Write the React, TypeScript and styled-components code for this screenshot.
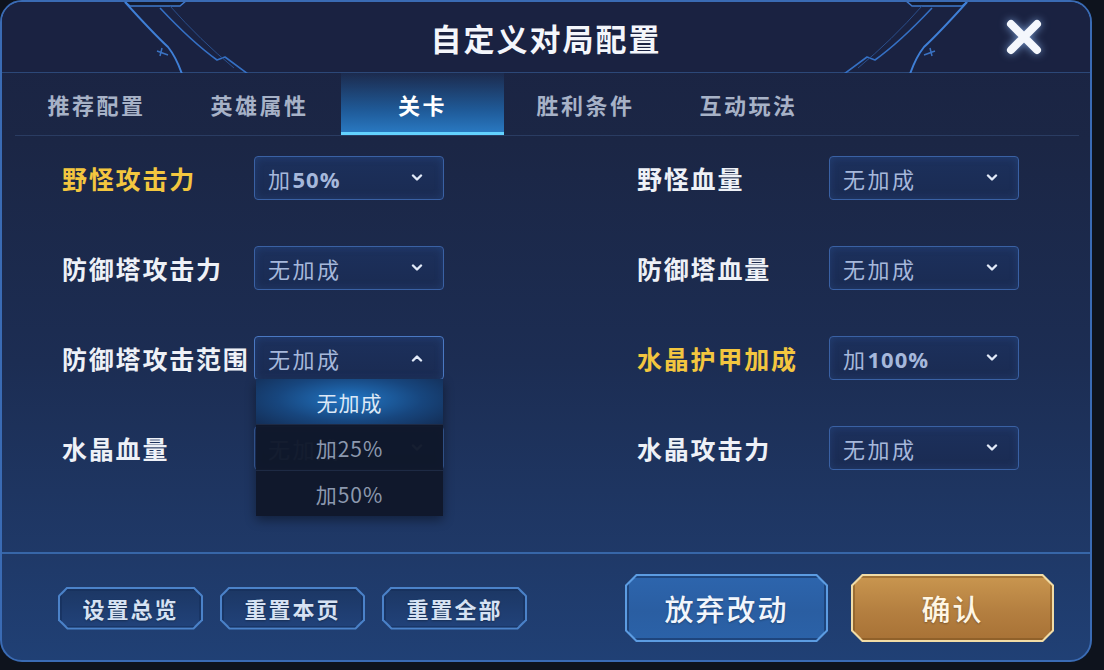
import React from 'react'
import styled, { createGlobalStyle, css } from 'styled-components'

const GlobalStyle = createGlobalStyle`
  html, body {
    margin: 0;
    padding: 0;
    background: #0e131d;
  }
  #root {
    width: 1104px;
    height: 670px;
    overflow: hidden;
  }
`

const CJK = `"Noto Sans CJK SC", "Noto Sans", sans-serif`

const Page = styled.div`
  width: 1104px;
  height: 670px;
  background: #0e131d;
  font-family: ${CJK};
`

const Panel = styled.div`
  position: relative;
  box-sizing: border-box;
  width: 1092px;
  height: 662px;
  border: 2px solid #3a6bb4;
  border-radius: 22px;
  overflow: hidden;
  display: flex;
  flex-direction: column;
  background: linear-gradient(
    180deg,
    #1a2342 0px,
    #1b2645 140px,
    #1c2d53 360px,
    #1f3968 553px,
    #204075 100%
  );
`

const Header = styled.div`
  position: relative;
  flex: 0 0 70px;
  display: flex;
  align-items: center;
  justify-content: center;
  background: #1a2241;
  border-bottom: 1px solid #2c4878;
`

const HeaderDeco = styled.svg`
  position: absolute;
  left: 0;
  top: 0;
  width: 1088px;
  height: 71px;
  pointer-events: none;
`

const Title = styled.h1`
  position: relative;
  margin: 0;
  font-size: 31px;
  font-weight: 700;
  letter-spacing: 2px;
  color: #f4f6fb;
`

const CloseButton = styled.button`
  position: absolute;
  right: 47px;
  top: 16px;
  width: 38px;
  height: 38px;
  padding: 0;
  border: 0;
  background: transparent;
  cursor: pointer;
  filter: drop-shadow(0 0 4px rgba(150, 195, 255, 0.7));
`

const TabBar = styled.div`
  flex: 0 0 62px;
  display: flex;
  margin: 0 11px 0 13px;
  border-bottom: 1px solid #2a3c62;
`

const Tab = styled.div<{ $active?: boolean }>`
  width: 163px;
  display: flex;
  align-items: center;
  justify-content: center;
  font-size: 22px;
  font-weight: 700;
  letter-spacing: 2.5px;
  color: #a7b2c7;
  ${(p) =>
    p.$active &&
    css`
      color: #ffffff;
      background: linear-gradient(180deg, rgba(30, 52, 92, 0.4) 0%, #1f5a98 60%, #2a7cc6 100%);
      box-shadow: inset 0 -3px 0 #63d2ff;
    `}
`

const Content = styled.div`
  flex: 1;
  display: grid;
  grid-template-columns: repeat(2, 382px);
  grid-auto-rows: 44px;
  column-gap: 193px;
  row-gap: 46px;
  padding: 20px 0 0 60px;
  align-content: start;
`

const Setting = styled.div`
  display: flex;
  align-items: center;
`

const Label = styled.div<{ $highlight?: boolean }>`
  flex: 0 0 192px;
  white-space: nowrap;
  font-size: 25px;
  font-weight: 700;
  letter-spacing: 1.8px;
  color: ${(p) => (p.$highlight ? '#f3c63f' : '#eef1f7')};
`

const SelectBox = styled.div<{ $open?: boolean }>`
  position: relative;
  box-sizing: border-box;
  width: 190px;
  height: 44px;
  display: flex;
  align-items: center;
  justify-content: space-between;
  padding: 0 20px 0 13px;
  border: 1.5px solid ${(p) => (p.$open ? '#4a78c2' : '#3a61a4')};
  border-radius: 4px;
  background: linear-gradient(180deg, #1c305c 0%, #1a2b52 100%);
  box-shadow: inset 0 0 8px rgba(60, 110, 190, 0.25);
`

const Value = styled.span`
  font-size: 22px;
  letter-spacing: 2.5px;
  color: #a6b8db;
`

const Num = styled.span`
  font-family: "Open Sans", "Liberation Sans", sans-serif;
  font-weight: 700;
  letter-spacing: 1px;
`

const Menu = styled.div`
  position: absolute;
  left: 1px;
  top: 100%;
  z-index: 5;
  width: 187px;
  display: flex;
  flex-direction: column;
  background: rgba(16, 24, 42, 0.97);
  box-shadow: 0 4px 10px rgba(0, 0, 0, 0.4);
`

const MenuItem = styled.div<{ $selected?: boolean }>`
  height: 45px;
  display: flex;
  align-items: center;
  justify-content: center;
  font-size: 21px;
  letter-spacing: 1px;
  color: #8c98ae;
  border-top: 1px solid rgba(40, 55, 85, 0.6);
  ${(p) =>
    p.$selected &&
    css`
      color: #dbe8f6;
      border-top: 0;
      background: radial-gradient(ellipse 70% 90% at 50% 45%, #2276c4 0%, #17467e 55%, #132a50 100%);
    `}
`

const Footer = styled.div`
  flex: 0 0 104px;
  display: flex;
  align-items: center;
  padding: 2px 36px 0 56px;
  border-top: 2px solid #3766a8;
`

const ButtonGroup = styled.div<{ $gap: number }>`
  display: flex;
  gap: ${(p) => p.$gap}px;
  &:last-child {
    margin-left: auto;
  }
`

const chamfer = (c: number) => css`
  clip-path: polygon(
    ${c}px 0,
    calc(100% - ${c}px) 0,
    100% ${c}px,
    100% calc(100% - ${c}px),
    calc(100% - ${c}px) 100%,
    ${c}px 100%,
    0 calc(100% - ${c}px),
    0 ${c}px
  );
`

type Variant = 'small' | 'blue' | 'gold'

const frame: Record<Variant, string> = {
  small: '#4b82c9',
  blue: '#5c9ce2',
  gold: '#f1dca6',
}

const fill: Record<Variant, string> = {
  small: 'linear-gradient(180deg, #1c3764 0%, #21427a 100%)',
  blue: 'linear-gradient(180deg, #2d65ad 0%, #2a5ea2 55%, #2b62a8 100%)',
  gold: 'linear-gradient(180deg, #c9964f 0%, #b47f40 55%, #a87236 100%)',
}

const ButtonFrame = styled.div<{ $variant: Variant }>`
  box-sizing: border-box;
  width: ${(p) => (p.$variant === 'small' ? 145 : 203)}px;
  height: ${(p) => (p.$variant === 'small' ? 43 : 68)}px;
  padding: 2px;
  background: ${(p) => frame[p.$variant]};
  ${(p) => chamfer(p.$variant === 'small' ? 9 : 11)}
`

const ButtonFace = styled.div<{ $variant: Variant }>`
  width: 100%;
  height: 100%;
  display: flex;
  align-items: center;
  justify-content: center;
  background: ${(p) => fill[p.$variant]};
  box-shadow: inset 0 0 0 2px
    ${(p) => (p.$variant === 'gold' ? 'rgba(120, 80, 30, 0.5)' : 'rgba(20, 45, 90, 0.55)')};
  font-size: ${(p) => (p.$variant === 'small' ? 22 : 29)}px;
  font-weight: ${(p) => (p.$variant === 'small' ? 700 : 500)};
  letter-spacing: 2px;
  color: ${(p) => (p.$variant === 'gold' ? '#fff6e4' : p.$variant === 'blue' ? '#f2f6fc' : '#d6e2f3')};
  text-shadow: 0 1px 2px rgba(0, 0, 0, 0.3);
  ${(p) => chamfer(p.$variant === 'small' ? 8 : 10)}
`

const Chevron = ({ up }: { up?: boolean }) => (
  <svg width="12" height="8" viewBox="0 0 12 8">
    <path
      d={up ? 'M2 6.5 L6 2.5 L10 6.5' : 'M2 1.5 L6 5.5 L10 1.5'}
      fill="none"
      stroke="#e2eaf8"
      strokeWidth="2.4"
      strokeLinecap="round"
      strokeLinejoin="round"
    />
  </svg>
)

const CloseIcon = () => (
  <svg width="38" height="38" viewBox="0 0 38 38">
    <path d="M6 6 L32 32 M32 6 L6 32" stroke="#f4f7fc" strokeWidth="8" strokeLinecap="round" />
  </svg>
)

// one side of the header frame lines, mirrored for the right side
const DecoSide = () => (
  <g fill="none" strokeLinejoin="round">
    <path d="M121 -2 L128 4 L178 4 L185 -2" fill="#131a2f" stroke="#3f79cc" strokeWidth="1.5" />
    <path d="M123 0 Q150 30 166 45 Q174 55 180 72" stroke="#3f7fd6" strokeWidth="2" />
    <path d="M155 49 L166 53 M160 46 L158 54" stroke="#3a72c2" strokeWidth="1.5" />
    <path d="M158 6 Q190 40 215 58 L223 55 L246 72" stroke="#3570c4" strokeWidth="1.6" />
    <path d="M168 4 Q198 38 232 66" stroke="#2a4f8c" strokeWidth="1" />
  </g>
)

type Row = { label: string; value: React.ReactNode; highlight?: boolean; open?: boolean }

const plus = (n: string) => (
  <>
    加<Num>{n}</Num>
  </>
)

const rows: Row[] = [
  { label: '野怪攻击力', value: plus('50%'), highlight: true },
  { label: '野怪血量', value: '无加成' },
  { label: '防御塔攻击力', value: '无加成' },
  { label: '防御塔血量', value: '无加成' },
  { label: '防御塔攻击范围', value: '无加成', open: true },
  { label: '水晶护甲加成', value: plus('100%'), highlight: true },
  { label: '水晶血量', value: '无加成' },
  { label: '水晶攻击力', value: '无加成' },
]

const tabs = ['推荐配置', '英雄属性', '关卡', '胜利条件', '互动玩法']
const options = ['无加成', '加25%', '加50%']

export default function App() {
  return (
    <Page>
      <GlobalStyle />
      <Panel>
        <Header>
          <HeaderDeco viewBox="0 0 1088 71">
            <DecoSide />
            <g transform="translate(1088 0) scale(-1 1)">
              <DecoSide />
            </g>
          </HeaderDeco>
          <Title>自定义对局配置</Title>
          <CloseButton aria-label="关闭">
            <CloseIcon />
          </CloseButton>
        </Header>

        <TabBar>
          {tabs.map((t) => (
            <Tab key={t} $active={t === '关卡'}>
              {t}
            </Tab>
          ))}
        </TabBar>

        <Content>
          {rows.map((r) => (
            <Setting key={r.label}>
              <Label $highlight={r.highlight}>{r.label}</Label>
              <SelectBox $open={r.open}>
                <Value>{r.value}</Value>
                <Chevron up={r.open} />
                {r.open && (
                  <Menu>
                    {options.map((o, i) => (
                      <MenuItem key={o} $selected={i === 0}>
                        {o}
                      </MenuItem>
                    ))}
                  </Menu>
                )}
              </SelectBox>
            </Setting>
          ))}
        </Content>

        <Footer>
          <ButtonGroup $gap={17}>
            {['设置总览', '重置本页', '重置全部'].map((b) => (
              <ButtonFrame key={b} $variant="small">
                <ButtonFace $variant="small">{b}</ButtonFace>
              </ButtonFrame>
            ))}
          </ButtonGroup>
          <ButtonGroup $gap={23}>
            <ButtonFrame $variant="blue">
              <ButtonFace $variant="blue">放弃改动</ButtonFace>
            </ButtonFrame>
            <ButtonFrame $variant="gold">
              <ButtonFace $variant="gold">确认</ButtonFace>
            </ButtonFrame>
          </ButtonGroup>
        </Footer>
      </Panel>
    </Page>
  )
}
